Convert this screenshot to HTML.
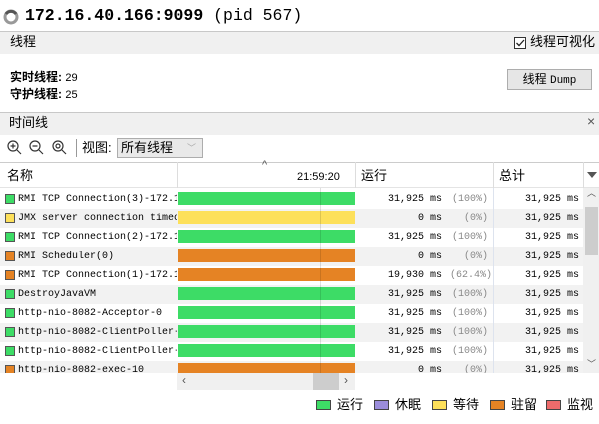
<!DOCTYPE html>
<html><head><meta charset="utf-8"><style>
*{margin:0;padding:0;box-sizing:border-box}
body{width:599px;height:424px;background:#fff;position:relative;overflow:hidden;font-family:"Liberation Sans","Noto Sans CJK SC",sans-serif;font-size:12px;color:#000;line-height:1.1}
.a{position:absolute}
.mono{font-family:"Liberation Mono","Noto Sans CJK SC",monospace}
.bar{background:#f0f0f0;border-top:1px solid #c8c8c8}
.row{position:absolute;left:0;width:583px;height:19px}
.row.g{background:#f2f2f2}
.nm{position:absolute;left:18px;top:4px;font-size:10px;white-space:nowrap;width:159px;overflow:hidden;font-family:"Liberation Mono","Noto Sans CJK SC",monospace}
.sq{position:absolute;left:5px;top:4px;width:10px;height:10px;border:1px solid #555}
.tb{position:absolute;left:178px;top:2px;width:177px;height:13px}
.ms{position:absolute;right:141px;top:4px;font-size:10px;font-family:"Liberation Mono",monospace}
.pc{position:absolute;left:450px;width:38px;text-align:right;top:4px;font-size:10px;color:#888;font-family:"Liberation Mono",monospace}
.tt{position:absolute;right:4px;top:4px;font-size:10px;font-family:"Liberation Mono",monospace}
.G{background:#3ddc66}.Y{background:#fde05a}.O{background:#e58324}
.lg{position:absolute;top:400px;width:15px;height:10px;border:1px solid #444}
.lt{position:absolute;top:398px;font-size:13px}
</style></head><body>
<svg class="a" style="left:3px;top:9px" width="16" height="16"><circle cx="8" cy="8" r="6" fill="none" stroke="#999" stroke-width="3"/><path d="M3 5 A6 6 0 0 1 13 5" fill="none" stroke="#555" stroke-width="3"/></svg>
<div class="a mono" style="left:25px;top:7px;font-size:16.5px;font-weight:bold;white-space:nowrap">172.16.40.166:9099 <span style="font-weight:normal">(pid 567)</span></div>
<div class="a bar" style="left:0;top:31px;width:599px;height:23px"></div>
<div class="a" style="left:10px;top:35px;font-size:13px">线程</div>
<div class="a" style="left:514px;top:37px;width:12px;height:12px;border:1px solid #333;background:#fff"></div>
<svg class="a" style="left:514px;top:37px" width="12" height="12"><path d="M2.5 6 L5 8.5 L10 3" fill="none" stroke="#222" stroke-width="1.3"/></svg>
<div class="a" style="left:530px;top:35px;font-size:13px">线程可视化</div>
<div class="a" style="left:10px;top:69px;font-size:12px;font-weight:bold;line-height:16px">实时线程: <span style="font-weight:normal;font-size:11px">29</span><br>守护线程: <span style="font-weight:normal;font-size:11px">25</span></div>
<div class="a" style="left:507px;top:69px;width:85px;height:21px;border:1px solid #adadad;background:#e6e6e6;text-align:center;line-height:19px;font-size:12px">线程 <span class="mono" style="font-size:11px">Dump</span></div>
<div class="a bar" style="left:0;top:112px;width:599px;height:23px"></div>
<div class="a" style="left:9px;top:116px;font-size:13px">时间线</div>
<div class="a" style="left:587px;top:114px;font-size:14px;color:#555">×</div>
<svg class="a" style="left:6px;top:139px" width="70" height="18" fill="none" stroke="#333" stroke-width="1.2">
<circle cx="7" cy="7" r="5"/><path d="M11 11 L15 15M4.5 7h5M7 4.5v5"/>
<circle cx="29" cy="7" r="5"/><path d="M33 11 L37 15M26.5 7h5"/>
<circle cx="52" cy="7" r="5"/><path d="M56 11 L60 15"/><circle cx="52" cy="7" r="2"/></svg>
<div class="a" style="left:76px;top:139px;width:1px;height:18px;background:#999"></div>
<div class="a" style="left:82px;top:141px;font-size:13px">视图:</div>
<div class="a" style="left:117px;top:138px;width:86px;height:20px;border:1px solid #adadad;background:#e9e9e9;font-size:13px;padding-left:3px;line-height:18px">所有线程<span style="position:absolute;right:6px;color:#aaa;font-size:9px">﹀</span></div>
<div class="a" style="left:0;top:162px;width:599px;height:1px;background:#ccc"></div>
<div class="a" style="left:0;top:187px;width:599px;height:1px;background:#e4e4e4"></div>
<div class="a" style="left:177px;top:162px;width:1px;height:26px;background:#ddd"></div>
<div class="a" style="left:355px;top:162px;width:1px;height:26px;background:#ddd"></div>
<div class="a" style="left:493px;top:162px;width:1px;height:26px;background:#ddd"></div>
<div class="a" style="left:583px;top:162px;width:1px;height:26px;background:#ddd"></div>
<div class="a" style="left:7px;top:169px;font-size:13px">名称</div>
<div class="a" style="left:262px;top:159px;font-size:11px;color:#555">^</div>
<div class="a" style="left:297px;top:171px;font-size:11px">21:59:20</div>
<div class="a" style="left:361px;top:169px;font-size:13px">运行</div>
<div class="a" style="left:499px;top:169px;font-size:13px">总计</div>
<div class="a" style="left:587px;top:172px;width:0;height:0;border-left:5px solid transparent;border-right:5px solid transparent;border-top:6px solid #555"></div>
<div class="a" style="left:0;top:188px;width:583px;height:185px;overflow:hidden">
<div class="row" style="top:2px"><div class="sq G"></div><div class="nm">RMI TCP Connection(3)-172.16.40.1</div><div class="tb G"></div><div class="ms">31,925 ms</div><div class="pc">(100%)</div><div class="tt">31,925 ms</div></div>
<div class="row g" style="top:21px"><div class="sq Y"></div><div class="nm">JMX server connection timeout</div><div class="tb Y"></div><div class="ms">0 ms</div><div class="pc">(0%)</div><div class="tt">31,925 ms</div></div>
<div class="row" style="top:40px"><div class="sq G"></div><div class="nm">RMI TCP Connection(2)-172.16.40.1</div><div class="tb G"></div><div class="ms">31,925 ms</div><div class="pc">(100%)</div><div class="tt">31,925 ms</div></div>
<div class="row g" style="top:59px"><div class="sq O"></div><div class="nm">RMI Scheduler(0)</div><div class="tb O"></div><div class="ms">0 ms</div><div class="pc">(0%)</div><div class="tt">31,925 ms</div></div>
<div class="row" style="top:78px"><div class="sq O"></div><div class="nm">RMI TCP Connection(1)-172.16.40.1</div><div class="tb O"></div><div class="ms">19,930 ms</div><div class="pc">(62.4%)</div><div class="tt">31,925 ms</div></div>
<div class="row g" style="top:97px"><div class="sq G"></div><div class="nm">DestroyJavaVM</div><div class="tb G"></div><div class="ms">31,925 ms</div><div class="pc">(100%)</div><div class="tt">31,925 ms</div></div>
<div class="row" style="top:116px"><div class="sq G"></div><div class="nm">http-nio-8082-Acceptor-0</div><div class="tb G"></div><div class="ms">31,925 ms</div><div class="pc">(100%)</div><div class="tt">31,925 ms</div></div>
<div class="row g" style="top:135px"><div class="sq G"></div><div class="nm">http-nio-8082-ClientPoller-0</div><div class="tb G"></div><div class="ms">31,925 ms</div><div class="pc">(100%)</div><div class="tt">31,925 ms</div></div>
<div class="row" style="top:154px"><div class="sq G"></div><div class="nm">http-nio-8082-ClientPoller-1</div><div class="tb G"></div><div class="ms">31,925 ms</div><div class="pc">(100%)</div><div class="tt">31,925 ms</div></div>
<div class="row g" style="top:173px"><div class="sq O"></div><div class="nm">http-nio-8082-exec-10</div><div class="tb O"></div><div class="ms">0 ms</div><div class="pc">(0%)</div><div class="tt">31,925 ms</div></div>
<div class="a" style="left:320px;top:0;width:1px;height:185px;background:rgba(0,0,0,.12)"></div>
<div class="a" style="left:493px;top:0;width:1px;height:185px;background:#dde3ee"></div>
</div>
<div class="a" style="left:583px;top:188px;width:16px;height:185px;background:#f0f0f0"></div>
<div class="a" style="left:585px;top:207px;width:13px;height:48px;background:#cdcdcd"></div>
<div class="a" style="left:587px;top:189px;font-size:9px;color:#555">︿</div>
<div class="a" style="left:587px;top:360px;font-size:9px;color:#555">﹀</div>
<div class="a" style="left:177px;top:373px;width:178px;height:17px;background:#f0f0f0"></div>
<div class="a" style="left:313px;top:373px;width:26px;height:17px;background:#cdcdcd"></div>
<div class="a" style="left:182px;top:374px;font-size:12px;color:#555">‹</div>
<div class="a" style="left:344px;top:374px;font-size:12px;color:#555">›</div>
<div class="lg G" style="left:316px"></div><div class="lt" style="left:337px">运行</div>
<div class="lg" style="left:374px;background:#9b8ddb"></div><div class="lt" style="left:395px">休眠</div>
<div class="lg Y" style="left:432px"></div><div class="lt" style="left:453px">等待</div>
<div class="lg O" style="left:490px"></div><div class="lt" style="left:511px">驻留</div>
<div class="lg" style="left:546px;background:#ee6b6b"></div><div class="lt" style="left:567px">监视</div>
</body></html>
